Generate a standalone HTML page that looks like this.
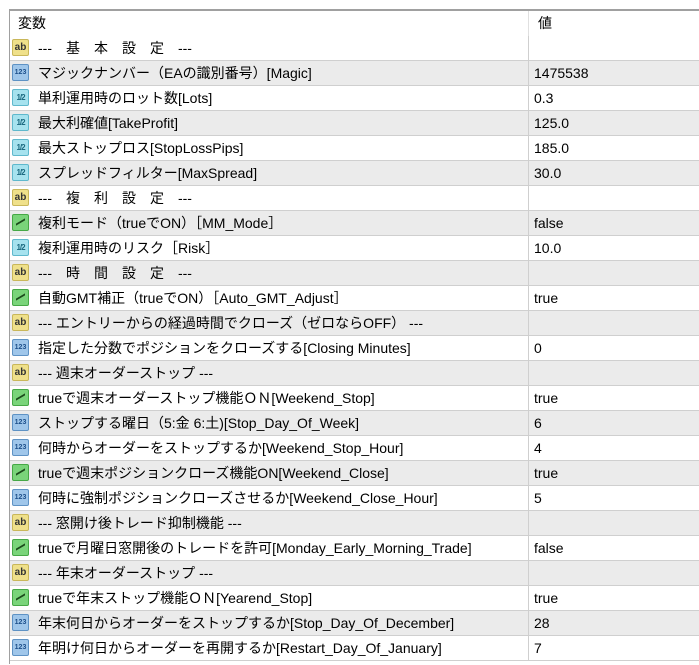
<!DOCTYPE html>
<html><head><meta charset="utf-8"><style>
body{margin:0;width:699px;height:665px;background:#fff;overflow:hidden;font-family:"Liberation Sans","Noto Sans CJK JP",sans-serif;font-size:14px;color:#000;}
#t{position:absolute;left:9px;top:9px;width:690px;height:653px;border-left:1px solid #a0a0a0;border-top:2px solid #a0a0a0;}
.h{position:absolute;left:0;top:0;width:690px;height:25px;}
.h span{position:absolute;top:0;line-height:25px;height:25px;}
.hd{position:absolute;left:518px;top:0;width:1px;height:25px;background:#e0e0e0;}
.r{position:absolute;left:0;width:690px;height:24px;border-bottom:1px solid #cfcfcf;}
.g{background:#ebebeb;}
.r .n,.r .v{position:absolute;top:0;height:24px;line-height:24px;white-space:pre;}
.r .n{left:28px;}
.r .v{left:524px;}
.r .d{position:absolute;left:518px;top:0;width:1px;height:25px;background:#cfcfcf;}
.i{position:absolute;left:2px;top:3px;width:17px;height:17px;border-radius:2px;font-size:9px;font-weight:bold;line-height:15px;text-align:center;box-sizing:border-box;font-family:"Liberation Sans",sans-serif;}
.ab{background:#efe08a;border:1px solid #c9b75a;color:#333;font-size:10px;}
.n3{background:#9fc6ea;border:1px solid #5e92c4;color:#1d4f8a;font-size:7px;}
.hf{background:#a6e2ee;border:1px solid #5fb8cc;color:#1d6a80;font-size:8px;letter-spacing:-1px;}
.b{background:#7ad47a;border:1px solid #46a846;}
.b:after{content:"";position:absolute;left:3px;top:6px;width:9px;height:3px;border-top:2px solid #1c4a1c;transform:skewY(-30deg);}
</style></head><body>
<div id="t">
<div class="h"><span style="left:8px">変数</span><span style="left:528px">値</span><div class="hd"></div></div>
<div class="r" style="top:25px"><div class="i ab">ab</div><span class="n">---　基　本　設　定　---</span><div class="d"></div></div>
<div class="r g" style="top:50px"><div class="i n3">123</div><span class="n">マジックナンバー（EAの識別番号）[Magic]</span><span class="v">1475538</span><div class="d"></div></div>
<div class="r" style="top:75px"><div class="i hf">1/2</div><span class="n">単利運用時のロット数[Lots]</span><span class="v">0.3</span><div class="d"></div></div>
<div class="r g" style="top:100px"><div class="i hf">1/2</div><span class="n">最大利確値[TakeProfit]</span><span class="v">125.0</span><div class="d"></div></div>
<div class="r" style="top:125px"><div class="i hf">1/2</div><span class="n">最大ストップロス[StopLossPips]</span><span class="v">185.0</span><div class="d"></div></div>
<div class="r g" style="top:150px"><div class="i hf">1/2</div><span class="n">スプレッドフィルター[MaxSpread]</span><span class="v">30.0</span><div class="d"></div></div>
<div class="r" style="top:175px"><div class="i ab">ab</div><span class="n">---　複　利　設　定　---</span><div class="d"></div></div>
<div class="r g" style="top:200px"><div class="i b"></div><span class="n">複利モード（trueでON）［MM_Mode］</span><span class="v">false</span><div class="d"></div></div>
<div class="r" style="top:225px"><div class="i hf">1/2</div><span class="n">複利運用時のリスク［Risk］</span><span class="v">10.0</span><div class="d"></div></div>
<div class="r g" style="top:250px"><div class="i ab">ab</div><span class="n">---　時　間　設　定　---</span><div class="d"></div></div>
<div class="r" style="top:275px"><div class="i b"></div><span class="n">自動GMT補正（trueでON）［Auto_GMT_Adjust］</span><span class="v">true</span><div class="d"></div></div>
<div class="r g" style="top:300px"><div class="i ab">ab</div><span class="n">--- エントリーからの経過時間でクローズ（ゼロならOFF） ---</span><div class="d"></div></div>
<div class="r" style="top:325px"><div class="i n3">123</div><span class="n">指定した分数でポジションをクローズする[Closing Minutes]</span><span class="v">0</span><div class="d"></div></div>
<div class="r g" style="top:350px"><div class="i ab">ab</div><span class="n">--- 週末オーダーストップ ---</span><div class="d"></div></div>
<div class="r" style="top:375px"><div class="i b"></div><span class="n">trueで週末オーダーストップ機能ＯＮ[Weekend_Stop]</span><span class="v">true</span><div class="d"></div></div>
<div class="r g" style="top:400px"><div class="i n3">123</div><span class="n">ストップする曜日（5:金 6:土)[Stop_Day_Of_Week]</span><span class="v">6</span><div class="d"></div></div>
<div class="r" style="top:425px"><div class="i n3">123</div><span class="n">何時からオーダーをストップするか[Weekend_Stop_Hour]</span><span class="v">4</span><div class="d"></div></div>
<div class="r g" style="top:450px"><div class="i b"></div><span class="n">trueで週末ポジションクローズ機能ON[Weekend_Close]</span><span class="v">true</span><div class="d"></div></div>
<div class="r" style="top:475px"><div class="i n3">123</div><span class="n">何時に強制ポジションクローズさせるか[Weekend_Close_Hour]</span><span class="v">5</span><div class="d"></div></div>
<div class="r g" style="top:500px"><div class="i ab">ab</div><span class="n">--- 窓開け後トレード抑制機能 ---</span><div class="d"></div></div>
<div class="r" style="top:525px"><div class="i b"></div><span class="n">trueで月曜日窓開後のトレードを許可[Monday_Early_Morning_Trade]</span><span class="v">false</span><div class="d"></div></div>
<div class="r g" style="top:550px"><div class="i ab">ab</div><span class="n">--- 年末オーダーストップ ---</span><div class="d"></div></div>
<div class="r" style="top:575px"><div class="i b"></div><span class="n">trueで年末ストップ機能ＯＮ[Yearend_Stop]</span><span class="v">true</span><div class="d"></div></div>
<div class="r g" style="top:600px"><div class="i n3">123</div><span class="n">年末何日からオーダーをストップするか[Stop_Day_Of_December]</span><span class="v">28</span><div class="d"></div></div>
<div class="r" style="top:625px"><div class="i n3">123</div><span class="n">年明け何日からオーダーを再開するか[Restart_Day_Of_January]</span><span class="v">7</span><div class="d"></div></div>
</div>
</body></html>
